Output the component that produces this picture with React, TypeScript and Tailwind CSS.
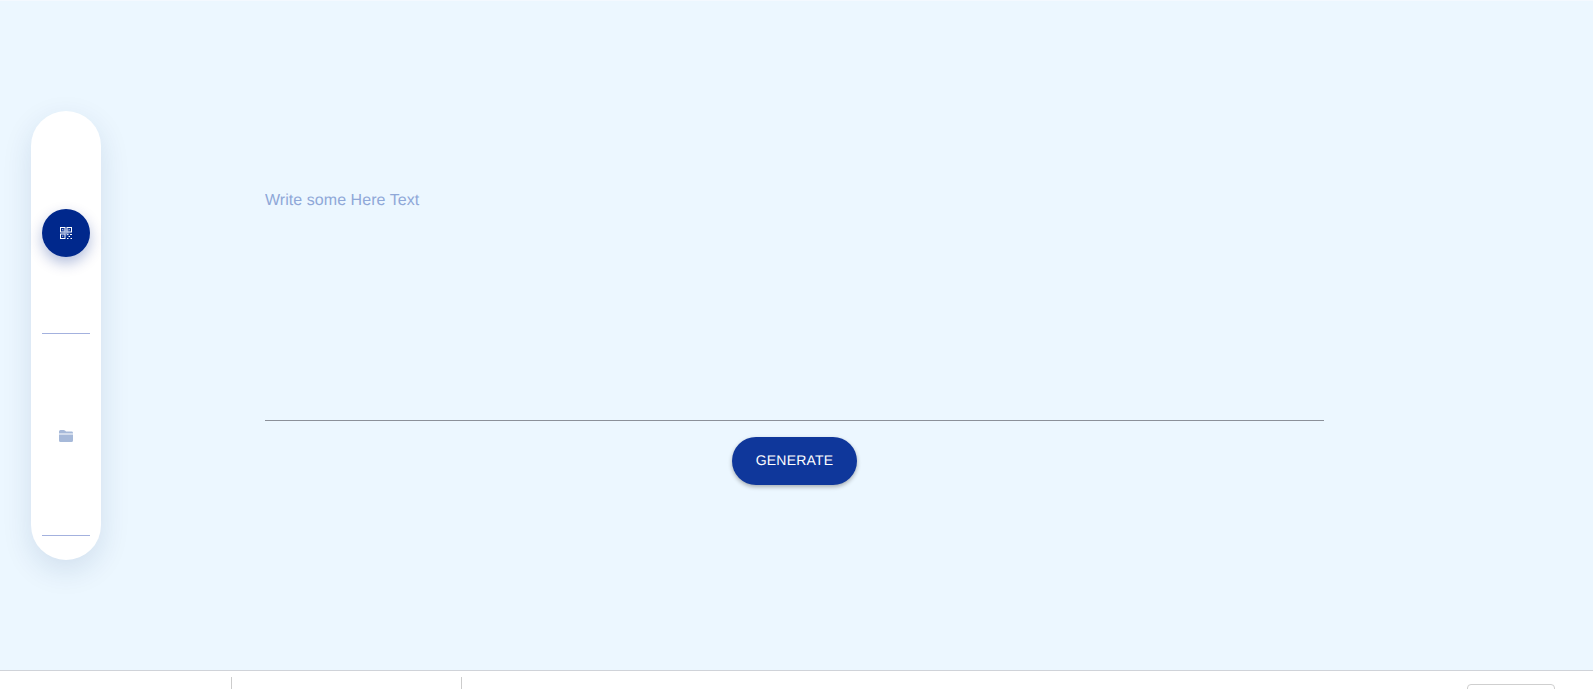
import React from 'react';

const QrIcon = () => (
    <svg viewBox="0 0 12 12" className="w-3 h-3" fill="none" stroke="white" strokeWidth="1">
        <defs>
            <filter id="qr-blur" x="-50%" y="-50%" width="200%" height="200%">
                <feGaussianBlur stdDeviation="0.8" />
            </filter>
        </defs>
        <rect x="0.5" y="0.5" width="4.5" height="4.5" />
        <rect x="7" y="0.5" width="4.5" height="4.5" />
        <rect x="0.5" y="7" width="4.5" height="4.5" />
        <path d="M2.2 2.7h1M8.7 2.7h1M2.2 9.2h1" />
        <path d="M7 7.5h1.5M10 7.5h2M8.5 9.5h1.5M7 11.5h1.5M10.5 11.5h1.5" />
        <circle cx="6" cy="5" r="3" fill="#a9b9e0" stroke="none" filter="url(#qr-blur)" opacity="0.85" />
    </svg>
);

const FolderIcon = () => (
    <svg viewBox="0 0 14 12" className="w-[14px] h-3" fill="#a6b9d9">
        <path d="M0 3.6V1.5A1.5 1.5 0 0 1 1.5 0H4.6Q5.4 0 6 .6L7 1.6H12.6A1.4 1.4 0 0 1 14 3V3.6Z" />
        <path d="M0 4.6h14v5.9A1.5 1.5 0 0 1 12.5 12H1.5A1.5 1.5 0 0 1 0 10.5Z" />
    </svg>
);

export default function App() {
    return (
        <div className="h-screen flex flex-col overflow-hidden bg-white font-['Liberation_Sans',sans-serif]">
            {/* Main */}
            <main className="flex-1 flex bg-[#ecf7ff] border-t border-[#f4f9ff]">
                {/* Side tabs */}
                <div className="ml-[31px] mt-[110px] h-[449px] w-[70px] rounded-[35px] bg-white shadow-[0_10px_30px_rgba(0,50,110,0.12)] pt-[21px] flex flex-col items-center">
                    <div className="w-12 h-[202px] flex items-center justify-center border-b border-[#a3b1de]">
                        <div className="w-12 h-12 rounded-full bg-[#00288c] flex items-center justify-center shadow-[0_6px_14px_rgba(0,40,140,0.3)]">
                            <QrIcon />
                        </div>
                    </div>
                    <div className="w-12 h-[202px] flex items-center justify-center border-b border-[#a3b1de] pt-[2px]">
                        <FolderIcon />
                    </div>
                </div>

                {/* Form */}
                <div className="ml-[164px] mt-[176px] w-[1059px] flex flex-col items-center">
                    <textarea
                        placeholder="Write some Here Text"
                        className="w-full h-[244px] resize-none bg-transparent border-b border-[#8b9099] outline-none text-base leading-6 pt-3 tracking-[0.05px] [text-rendering:geometricPrecision] placeholder:text-[#8fa8d8]"
                    />
                    <button className="mt-4 w-[125px] h-12 pb-[2px] rounded-3xl bg-[#0f379b] text-white text-sm tracking-[0.2px] [text-rendering:geometricPrecision] shadow-[0_2px_4px_rgba(0,0,0,0.3)]">
                        GENERATE
                    </button>
                </div>
            </main>

            {/* Footer */}
            <footer className="h-[19px] shrink-0 bg-white border-t border-[#d0d3d9] flex items-start pl-[231px] pr-[38px] pt-[6px]">
                <div className="w-px h-3 bg-[#cccccc]" />
                <div className="w-px h-3 bg-[#cccccc] ml-[229px]" />
                <div className="ml-auto mt-[7px] w-[88px] h-5 border border-[#cfcfcf] rounded-[4px]" />
            </footer>
        </div>
    );
}
